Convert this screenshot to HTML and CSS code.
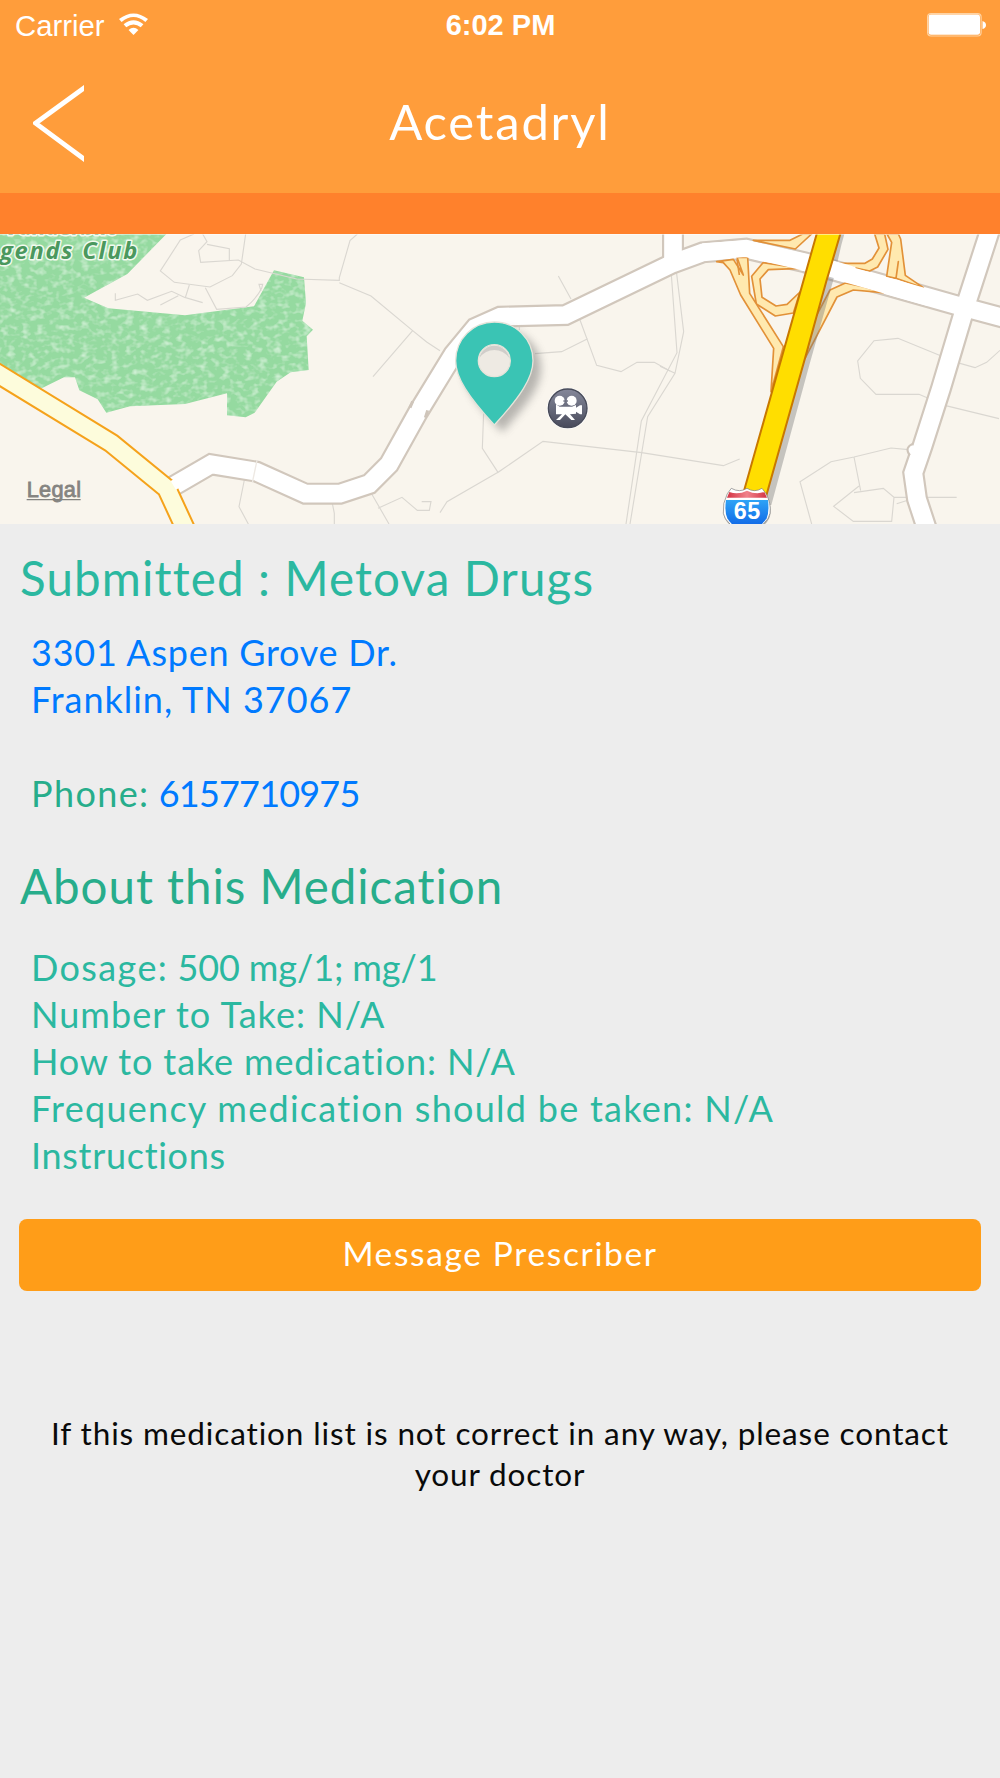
FILE: index.html
```html
<!DOCTYPE html>
<html lang="en">
<head>
<meta charset="utf-8">
<title>Acetadryl</title>
<link rel="stylesheet" href="styles.css">
</head>
<body>
<header class="header">
  <div class="status">
    <div class="status-left">
      <span class="carrier">Carrier</span>
      <svg class="wifi" viewBox="0 0 88 64"><path d="M0 17Q44-17 88 17L80 26Q44-4 8 26Z"/><path d="M14 33Q44 8 74 33L66 42Q44 25 22 42Z"/><path d="M29 50Q44 37 59 50L44 65Z"/></svg>
    </div>
    <span class="time">6:02 PM</span>
    <div class="status-right">
      <svg class="battery" viewBox="0 0 59 24"><rect x=".6" y=".6" width="53.5" height="22.4" rx="3.5"/><rect class="charge" x="1.6" y="1.6" width="51.4" height="20.2" rx="2.4"/><path class="charge" d="M55.5 8Q59 9 59 12Q59 15 55.5 16Z"/></svg>
    </div>
  </div>
  <nav class="nav">
    <a class="back" aria-label="Back"><svg viewBox="0 0 51 77"><path d="M53 1.5L2.5 38.2L53 75.5"/></svg></a>
    <h1 class="title">Acetadryl</h1>
    <span></span>
  </nav>
</header>
<div class="strip"></div>
<svg class="map" viewBox="0 27 3000 870">
  <defs>
    <filter id="grass" x="0" y="0" width="100%" height="100%">
      <feTurbulence type="fractalNoise" baseFrequency=".045 .06" numOctaves="2" seed="4"/>
      <feColorMatrix values="0 0 0 0 .74  0 0 0 0 .93  0 0 0 0 .77  1.7 0 0 0 -.8"/>
      <feGaussianBlur stdDeviation="2"/>
      <feComposite in2="SourceGraphic" operator="in" result="flecks"/>
      <feMerge><feMergeNode in="SourceGraphic"/><feMergeNode in="flecks"/></feMerge>
    </filter>
    <filter id="soft" x="-40%" y="-40%" width="180%" height="180%"><feGaussianBlur stdDeviation="13"/></filter>
    <linearGradient id="slate" x2="0" y2="1"><stop stop-color="#85879a"/><stop offset=".5" stop-color="#686b7c"/><stop offset="1" stop-color="#484a5b"/></linearGradient>
    <linearGradient id="blue" x2="0" y2="1"><stop stop-color="#2ea3f6"/><stop offset="1" stop-color="#0858e2"/></linearGradient>
    <linearGradient id="red"><stop stop-color="#d33343"/><stop offset=".5" stop-color="#f0828b"/><stop offset="1" stop-color="#d33343"/></linearGradient>
  </defs>
  <rect y="27" width="3000" height="870" fill="#f9f5ed"/>
  <path class="park" filter="url(#grass)" d="M-10 20H506L382 147L252 218L325 250L555 271L762 244L822 136L912 157L918 235L907 287L939 314L920 334L926 435L872 442L830 470L764 563L737 577L681 571V505L555 537L390 544L319 563L293 523L238 496L225 457H192L125 490L-10 440Z"/>
  <g class="lanes">
    <path d="M582 27L541 45L481 138L523 172L630 186L697 152L724 117L737 27M608 27L621 50L596 77L602 112L715 105L765 132L890 162L1018 166V158L1050 47L1072 27M621 58L688 71V105M568 180L556 218L608 233M346 205V226L413 207L442 226L515 199L556 218M481 240L535 212M616 188L650 253L738 246Q770 220 785 190L788 178H777L783 198M733 765L717 845L745 897M997 835L1003 865V897"/>
    <path d="M1018 173L1113 213L1238 317L1280 351L1320 377M1238 317L1119 455M1675 153L1713 222M1740 285L1790 421L1863 440L1911 412H1963L2010 438M1605 386L1685 380L1763 341M1558 300V315M1451 560L1447 670L1494 742L1629 649L1925 683L2170 722L2219 702M1494 742L1341 830L1320 863M1113 803L1167 897M1134 850L1206 817L1252 856H1288L1293 830H1265"/>
    <path d="M2013 135L2031 383L1924 588L1878 897M2028 130L2051 320L2025 445L1943 575L1890 897M1980 424L2025 445M2822 392L2694 340L2622 347L2573 408L2581 460L2628 508H2757L2783 519M2872 413L2925 428L2960 412L3000 376M2837 542L2997 581M2435 897L2400 770L2493 710L2562 696L2673 669L2725 674M2562 696L2582 797M2562 803L2650 790L2682 817L2675 889H2560L2501 844L2577 783M2682 817H2870M2690 836L2728 824"/>
  </g>
  <g fill="none">
    <path class="casing" d="M2019 10V110"/>
    <path class="casing" d="M500 795L633 718L770 740L916 806H1020L1108 777L1167 718L1255 560L1360 388L1426 308L1500 275L1697 270L2018 115L2108 82L2238 71L2415 112L2867 240L3010 278"/>
    <path class="casing" d="M2975 0L2900 232L2823 490L2767 665L2740 744L2751 822L2780 910"/>
    <path class="paving" d="M2019 10V110"/>
    <path class="paving" d="M500 795L633 718L770 740L916 806H1020L1108 777L1167 718L1255 560L1360 388L1426 308L1500 275L1697 270L2018 115L2108 82L2238 71L2415 112L2867 240L3010 278"/>
    <path class="paving" d="M2975 0L2900 232L2823 490L2767 665L2740 744L2751 822L2780 910"/>
    <path d="M1238 529L1230 548M1283 556L1276 578" stroke="#cfc5ba" stroke-width="9"/>
    <circle cx="2735" cy="674" r="13" fill="#fff"/><path d="M2739 656Q2712 668 2729 691" stroke="#cfc5ba" stroke-width="6"/>
    <path d="M771 706L757 773" stroke="#eee9e3" stroke-width="4"/>
    <path d="M-20 438L335 655L500 790L560 920" stroke="#f5a21b" stroke-width="63"/>
    <path d="M-20 438L335 655L500 790L560 920" stroke="#fdfcdc" stroke-width="51"/>
    <path d="M520 781L545 766" stroke="#fff" stroke-width="31"/>
  </g>
  <g class="ramp">
    <path d="M2435 27L2386 72L2260 46H2370L2408 27Z"/>
    <path d="M2405 130L2305 134L2280 162L2286 217L2328 243L2361 238L2400 201L2380 264L2326 273L2269 237L2255 154L2289 113Z"/>
    <path d="M2150 110L2200 103L2230 150L2211 97H2243L2249 205L2350 365L2313 500L2321 370L2222 210L2190 135L2170 113Z"/>
    <path d="M2211 103L2218 150"/>
    <path d="M2500 115H2595L2617 102L2637 69L2624 27H2654L2664 73L2633 126L2609 138Z"/>
    <path d="M2661 27L2675 52L2660 154L2688 160L2695 110L2688 160L2770 188L2716 151L2702 42L2695 27Z"/>
    <path d="M2650 203L2560 195L2511 216L2415 400L2445 280L2490 195L2536 174L2590 185Z"/>
  </g>
  <path d="M2108 80L2238 71L2415 112L2790 219" fill="none" stroke="#fff" stroke-width="50"/>
  <path d="M2535 20L2524 60L2500 165L2428 420L2314 840H2290L2516 20Z" fill="#777" opacity=".4"/>
  <path d="M2490 130L2560 150" stroke="#fff" stroke-width="50"/>
  <path d="M2452 20L2220 840L2291 840L2415 400L2480 165L2492 125L2523 20Z" fill="#ffde00" stroke="#c87800" stroke-width="6"/>
  <g>
    <path d="M2194 790Q2219 804 2241 790Q2263 804 2286 790L2298 806Q2314 835 2310 865Q2305 897 2240 930Q2175 897 2170 865Q2167 835 2182 806Z" fill="#888" opacity=".65" transform="translate(1 4)"/>
    <path d="M2194 790Q2219 804 2241 790Q2263 804 2286 790L2298 806Q2314 835 2310 865Q2305 897 2240 930Q2175 897 2170 865Q2167 835 2182 806Z" fill="#fff" stroke="#777" stroke-width="2"/>
    <path d="M2188 801Q2215 810 2241 797Q2268 810 2293 801L2301 818H2181Z" fill="url(#red)"/>
    <path d="M2178 825H2304Q2308 860 2300 880Q2285 905 2241 923Q2195 905 2182 880Q2173 860 2178 825Z" fill="url(#blue)"/>
    <text class="route" x="2241" y="883" textLength="80">65</text>
  </g>
  <text class="park-name" x="15" y="31" textLength="335">Vanderbilt</text>
  <text class="park-name" x="0" y="103" textLength="412">gends Club</text>
  <text class="legal" x="80" y="815" textLength="163">Legal</text>
  <path d="M80 824H242" stroke="#858481" stroke-width="4"/>
  <path d="M1483 291A116 116 0 0 0 1367 407C1367 468 1410 515 1483 600C1556 515 1599 468 1599 407A116 116 0 0 0 1483 291Z" fill="#555" opacity=".4" filter="url(#soft)" transform="translate(24 22)"/>
  <circle cx="1483" cy="407" r="48" fill="#eeeae3"/>
  <path d="M1438 399A46 46 0 0 1 1528 399Q1510 375 1483 375T1438 399" fill="#aaa" opacity=".45"/>
  <path fill-rule="evenodd" d="M1483 291A116 116 0 0 0 1367 407C1367 458 1405 515 1483 600C1561 515 1599 458 1599 407A116 116 0 0 0 1483 291ZM1483 359A48 48 0 1 1 1483 455A48 48 0 1 1 1483 359Z" fill="#3ac4b4" stroke="#e6e4da" stroke-width="4"/>
  <circle cx="1703" cy="550" r="62" fill="#fff"/>
  <circle cx="1703" cy="550" r="58" fill="url(#slate)" stroke="#484b59" stroke-width="4"/>
  <g fill="#fff">
    <circle cx="1679" cy="527" r="15"/><circle cx="1715" cy="527" r="15"/>
    <path d="M1668 538L1679 545H1716L1728 540V548L1740 541H1746V568H1740L1728 560V566L1710 568L1725 585H1714L1696 568L1680 585H1668L1686 568H1668Z"/>
  </g>
  <path d="M1690 528H1704" stroke="#686b7c" stroke-width="4"/>
  <path d="M0 28H3000" stroke="#fff" stroke-width="4" opacity=".5"/>
</svg>
<main class="content">
  <h2 class="heading submitted">Submitted : Metova Drugs</h2>
  <div class="details address">
    <p class="street"><a class="link">3301 Aspen Grove Dr.</a></p>
    <p class="city"><a class="link">Franklin, TN 37067</a></p>
    <p class="phone"><span class="label">Phone:</span> <a class="link number">6157710975</a></p>
  </div>
  <h2 class="heading about">About this Medication</h2>
  <div class="details medication">
    <p class="dosage"><span class="label">Dosage:</span> 500 mg/1; mg/1</p>
    <p class="amount">Number to Take: N/A</p>
    <p class="method">How to take medication: N/A</p>
    <p class="frequency">Frequency medication should be taken: N/A</p>
    <p class="instructions">Instructions</p>
  </div>
  <button class="message">Message Prescriber</button>
  <p class="note">If this medication list is not correct in any way, please contact<br>your doctor</p>
</main>
</body>
</html>
```
FILE: styles.css
```css
* { box-sizing: border-box; }
body { margin: 0; width: 1000px; min-height: 1778px; background: #ededed; font-family: Lato, "Open Sans", sans-serif; font-variant-ligatures: none; }
h1, h2, p { margin: 0; font-weight: 400; }

.header { height: 193px; background: #ff9d3b; color: #fff; }
.status { display: grid; grid-template-columns: 1fr auto 1fr; align-items: center; height: 51px; padding: 0 14px 0 15px; font: 29.3px/51px "Liberation Sans", Arial, sans-serif; }
.status-left { display: flex; align-items: center; gap: 14px; }
.status-right { display: flex; justify-content: flex-end; }
.wifi { width: 29px; height: 22px; margin-bottom: 3px; fill: #fff; }
.time { font-weight: 700; font-size: 29px; }
.battery { width: 59px; height: 24px; margin-bottom: 1px; fill: none; stroke: #ffd3a3; stroke-width: 1.2; }
.battery .charge { fill: #fff; stroke: none; }
.nav { display: grid; grid-template-columns: 1fr auto 1fr; height: 142px; padding: 34px 33px 0; align-items: start; }
.back svg { display: block; width: 51px; height: 77px; fill: none; stroke: #fff; stroke-width: 4.8; }
.title { font-size: 49px; line-height: 59px; padding-top: 7px; letter-spacing: 1.8px; }
.strip { height: 41px; background: #ff812c; }

.map { display: block; width: 1000px; height: 290px; }
.park { fill: #95daa0; }
.lanes { fill: none; stroke: #dad7d1; stroke-width: 3.4; }
.casing { stroke: #d1c7bc; stroke-width: 66; }
.paving { stroke: #fff; stroke-width: 53; }
.ramp { fill: #ffe9af; stroke: #e29138; stroke-width: 5; stroke-linejoin: round; }
.route { font: 700 70px "Liberation Sans", Arial, sans-serif; fill: #fff; text-anchor: middle; }
.park-name { font: italic 700 71px "Open Sans", sans-serif; fill: #4b985e; stroke: #f2faef; stroke-width: 9; paint-order: stroke; stroke-linejoin: round; }
.legal { font: 65px "Liberation Sans", Arial, sans-serif; fill: #858481; stroke: #858481; stroke-width: 2.5; }

.content { display: flex; flex-direction: column; padding: 25px 19px 0; color: #2bb8a0; }
.heading { padding-left: 1px; font-size: 47.5px; line-height: 57px; letter-spacing: 1.15px; white-space: nowrap; }
.about { margin-top: 40px; color: #27ad8b; letter-spacing: .95px; }
.details { padding-left: 12px; font-size: 36px; line-height: 47px; white-space: nowrap; }
.address { margin-top: 23px; }
.street { letter-spacing: .75px; }
.city { letter-spacing: .97px; }
.phone { margin-top: 47px; color: #27ad8b; }
.label { letter-spacing: 1.4px; }
.number { letter-spacing: -.8px; }
.link { color: #007aff; }
.medication { margin-top: 30px; }
.dosage { letter-spacing: -.1px; }
.amount { letter-spacing: 1.05px; }
.method { letter-spacing: .87px; }
.frequency { letter-spacing: 1.27px; }
.instructions { letter-spacing: .7px; }
.message { height: 72px; margin-top: 40px; padding: 0 0 4px; border: 0; border-radius: 8px; background: #ff9d18; color: #fff; font: 33.5px/68px Lato, sans-serif; letter-spacing: 1.64px; }
.note { margin-top: 122px; color: #0a0a0a; font-size: 31.5px; line-height: 41px; letter-spacing: .87px; text-align: center; white-space: nowrap; }
```
